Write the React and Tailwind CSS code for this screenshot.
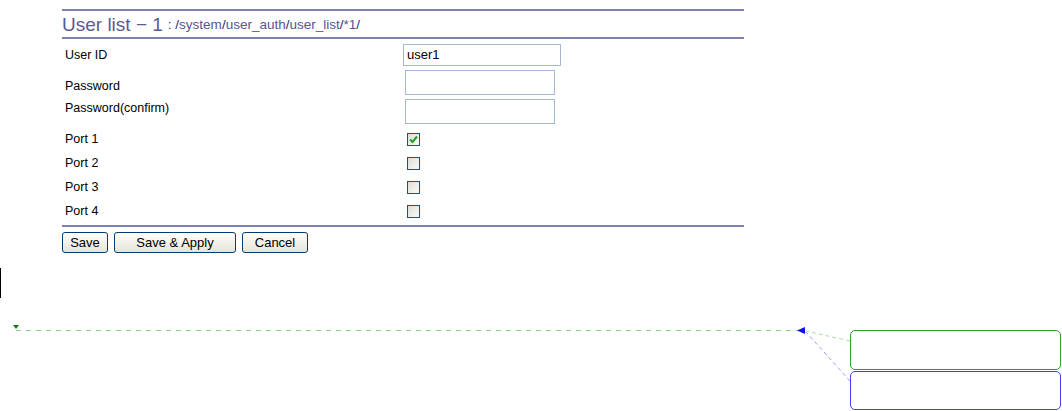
import React from "react";

const ports = [
  { name: "Port 1", on: true },
  { name: "Port 2", on: false },
  { name: "Port 3", on: false },
  { name: "Port 4", on: false },
];

function Box({ on }) {
  return (
    <span className="flex h-[13px] w-[13px] items-center justify-center border border-[#1c5180] bg-gradient-to-br from-[#dcdcd7] to-[#fbfbf9]">
      {on && (
        <svg width="9" height="9" viewBox="0 0 9 9">
          <path d="M1 4.5 L3.5 7 L8 1.5" fill="none" stroke="#21a121" strokeWidth="2" />
        </svg>
      )}
    </span>
  );
}

function Btn({ children, w }) {
  return (
    <button
      className={`h-[21px] ${w} rounded-[3px] border border-[#003c74] bg-gradient-to-b from-white to-[#e6e3d6] text-[13px] leading-none text-black`}
    >
      {children}
    </button>
  );
}

export default function App() {
  return (
    <div className="relative h-[411px] w-[1062px] overflow-hidden bg-white font-['Liberation_Sans',Arial,sans-serif] text-[12.5px] text-black">
      <div className="ml-[62px] w-[682px] pt-[9px]">
        <div className="h-[2px] bg-[#7f7fae]" />
        <div className="flex h-[26px] items-center gap-[5px] pt-[1px]">
          <span className="text-[19px] leading-none text-[#5a5a94]">User list − 1</span>
          <span className="text-[13.5px] leading-none text-[#2c2c6c]">
            : /<span className="text-[#555599]">system</span>/<span className="text-[#555599]">user_auth</span>/<span className="text-[#555599]">user_list</span>/<span className="text-[#555599]">*1</span>/
          </span>
        </div>
        <div className="h-[2px] bg-[#7f7fae]" />

        <div className="flex h-[31px]">
          <div className="w-[341px] pl-[3px] pt-[7px]">User ID</div>
          <div className="pt-[5px]">
            <div className="flex h-[22px] w-[158px] items-center border border-[#a5b8d2] px-[3px] text-[13px]">user1</div>
          </div>
        </div>
        <div className="flex h-[29px]">
          <div className="w-[343px] pl-[3px] pt-[7px]">Password</div>
          <div className="h-[25px] w-[150px] border border-[#a5b8d2]" />
        </div>
        <div className="flex h-[28px]">
          <div className="w-[343px] pl-[3px]">Password(confirm)</div>
          <div className="h-[25px] w-[150px] border border-[#a5b8d2]" />
        </div>

        {ports.map((p) => (
          <div key={p.name} className="flex h-[24px] items-center">
            <div className="w-[345px] pl-[3px]">{p.name}</div>
            <Box on={p.on} />
          </div>
        ))}

        <div className="mt-[2px] h-[2px] bg-[#7f7fae]" />
        <div className="flex gap-[6px] pt-[5px]">
          <Btn w="w-[46px]">Save</Btn>
          <Btn w="w-[122px]">Save &amp; Apply</Btn>
          <Btn w="w-[66px]">Cancel</Btn>
        </div>
      </div>

      <div className="absolute left-0 top-[268px] h-[30px] w-[1px] bg-black" />

      <svg className="absolute left-0 top-0" width="1062" height="411">
        <line x1="16" y1="330.5" x2="800" y2="330.5" stroke="#8fd08f" strokeDasharray="5 5" />
        <path d="M13 325 L19 325 L16 329 Z" fill="#108010" />
        <line x1="850" y1="341" x2="806" y2="331" stroke="#a8dca8" strokeDasharray="4 3" />
        <line x1="850" y1="381" x2="806" y2="332" stroke="#9a9aff" strokeDasharray="4 3" />
        <path d="M797 330.5 L805 327 L805 334 Z" fill="#1010e0" />
      </svg>

      <div className="absolute left-[850px] top-[330px] h-[40px] w-[211px] rounded-[5px] border border-[#30a030]" />
      <div className="absolute left-[850px] top-[371px] h-[39px] w-[211px] rounded-[5px] border border-[#4040f0]" />
    </div>
  );
}
